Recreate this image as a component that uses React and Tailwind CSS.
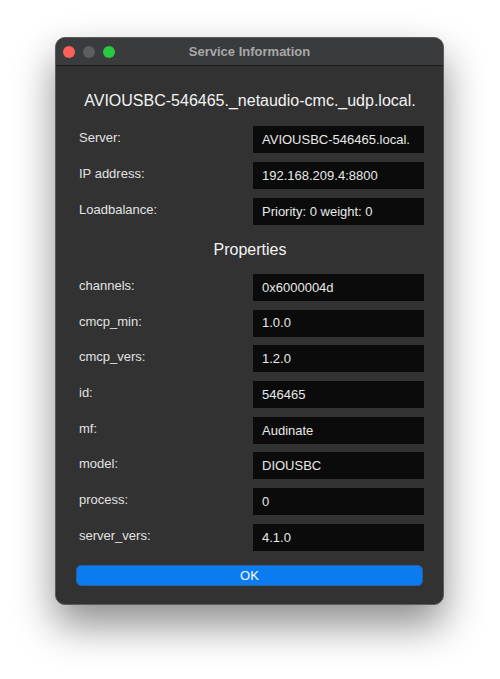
import React from 'react';

const serviceRows = [
    ['Server:', 'AVIOUSBC-546465.local.'],
    ['IP address:', '192.168.209.4:8800'],
    ['Loadbalance:', 'Priority: 0 weight: 0'],
];

const propertyRows = [
    ['channels:', '0x6000004d'],
    ['cmcp_min:', '1.0.0'],
    ['cmcp_vers:', '1.2.0'],
    ['id:', '546465'],
    ['mf:', 'Audinate'],
    ['model:', 'DIOUSBC'],
    ['process:', '0'],
    ['server_vers:', '4.1.0'],
];

const Row = ({ label, value }) => (
    <div className="flex items-start h-[27px]">
        <span className="pl-[3px] pt-[4px] w-[177px] text-[13px] leading-[16px] text-[#e2e2e2]">{label}</span>
        <div className="flex-1 h-[27px] bg-[#0b0b0b] flex items-center pl-[9px] text-[13px] text-[#e8e8e8]">
            {value}
        </div>
    </div>
);

const App = () => {
    return (
        <div
            className="w-[500px] h-[679px] bg-white pt-[37px] pl-[55px]"
            style={{ fontFamily: '"Liberation Sans", Arial, sans-serif' }}
        >
            <div className="w-[389px] h-[568px] rounded-[10px] bg-[#323232] border border-[#5c5c5c] overflow-hidden flex flex-col shadow-[0_20px_40px_rgba(0,0,0,0.45)]">
                {/* Barre de titre */}
                <div className="relative h-[28px] bg-[#3a3b3d] border-b border-[#1c1c1c] flex items-center pl-[7px] gap-[8px] shrink-0">
                    <span className="w-[12px] h-[12px] rounded-full bg-[#fe5f57]" />
                    <span className="w-[12px] h-[12px] rounded-full bg-[#5d5e60]" />
                    <span className="w-[12px] h-[12px] rounded-full bg-[#28c840]" />
                    <span className="absolute inset-0 flex items-center justify-center text-[13px] font-bold text-[#a8a8a8]">
                        Service Information
                    </span>
                </div>

                {/* Contenu */}
                <div className="flex-1 flex flex-col pl-[20px] pr-[19px] pt-[25px]">
                    <h1 className="text-center text-[16px] leading-[20px] text-[#f2f2f2]">
                        AVIOUSBC-546465._netaudio-cmc._udp.local.
                    </h1>
                    <div className="mt-[15px] flex flex-col gap-[9px]">
                        {serviceRows.map(([label, value]) => (
                            <Row key={label} label={label} value={value} />
                        ))}
                    </div>
                    <h2 className="mt-[15px] text-center text-[16px] leading-[20px] text-[#f2f2f2]">Properties</h2>
                    <div className="mt-[14px] flex flex-col gap-[8.7px]">
                        {propertyRows.map(([label, value]) => (
                            <Row key={label} label={label} value={value} />
                        ))}
                    </div>
                </div>

                <div className="pl-[20px] pr-[20px] pb-[17px]">
                    <button className="w-full h-[21px] rounded-[5px] bg-[#0a7cf0] border border-[#2a5fa0] text-[13px] leading-[19px] text-white">
                        OK
                    </button>
                </div>
            </div>
        </div>
    );
};

export default App;
